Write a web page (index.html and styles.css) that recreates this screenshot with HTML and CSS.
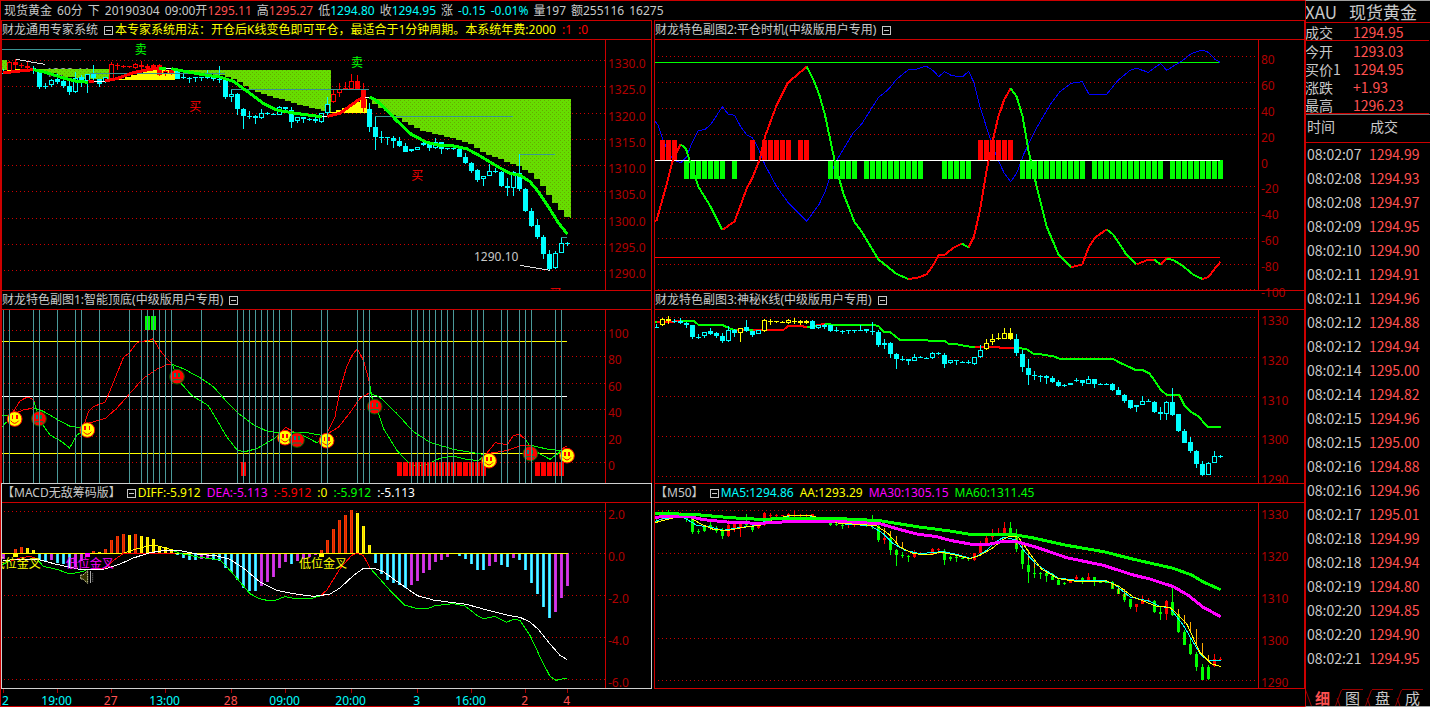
FILE: index.html
```html
<!DOCTYPE html>
<html lang="zh-CN">
<head>
  <meta charset="UTF-8">
  <title>现货黄金 60分</title>
  <link rel="stylesheet" href="styles.css">
</head>
<body>
  <main class="charts">
    <div class="topbar">
      <span>现货黄金</span><span>60分</span><span class="period">下</span><span>20190304</span>
      <span>09:00开<b class="up">1295.11</b></span>
      <span>高<b class="up">1295.27</b></span>
      <span>低<b class="down">1294.80</b></span>
      <span>收<b class="down">1294.95</b></span>
      <span>涨</span><span class="down">-0.15</span><span class="down">-0.01%</span>
      <span>量197</span><span>额255116</span><span>16275</span>
    </div>

    <section class="panel">
      <div class="head">
        <span>财龙通用专家系统</span><button class="fold" aria-label="收起"></button>
        <span class="yellow">本专家系统用法：开仓后K线变色即可平仓，最适合于1分钟周期。本系统年费:2000</span>
        <span class="red">:1</span><span class="red">:0</span>
      </div>
      <div class="body">
        <svg class="plot" id="main" viewBox="6 120 1809 750" preserveAspectRatio="none"></svg>
        <div class="axis axis-main">
          <span>1330.0</span><span>1325.0</span><span>1320.0</span><span>1315.0</span><span>1310.0</span><span>1305.0</span><span>1300.0</span><span>1295.0</span><span>1290.0</span>
        </div>
      </div>
    </section>

    <section class="panel overhang">
      <div class="head">
        <span>财龙特色副图2:平仓时机(中级版用户专用)</span><button class="fold" aria-label="收起"></button>
      </div>
      <div class="body">
        <svg class="plot" id="exit" viewBox="15 120 1809 750" preserveAspectRatio="none"></svg>
        <div class="axis axis-exit">
          <span>80</span><span>60</span><span>40</span><span>20</span><span>0</span><span>-20</span><span>-40</span><span>-60</span><span>-80</span><span>-100</span>
        </div>
      </div>
    </section>

    <section class="panel">
      <div class="head">
        <span>财龙特色副图1:智能顶底(中级版用户专用)</span><button class="fold" aria-label="收起"></button>
      </div>
      <div class="body">
        <svg class="plot" id="peaks" viewBox="6 60 1809 519" preserveAspectRatio="none"></svg>
        <div class="axis axis-peaks">
          <span>100</span><span>80</span><span>60</span><span>40</span><span>20</span><span>0</span>
        </div>
      </div>
    </section>

    <section class="panel">
      <div class="head">
        <span>财龙特色副图3:神秘K线(中级版用户专用)</span><button class="fold" aria-label="收起"></button>
      </div>
      <div class="body">
        <svg class="plot" id="kline" viewBox="15 60 1809 519" preserveAspectRatio="none"></svg>
        <div class="axis axis-kline">
          <span>1330</span><span>1320</span><span>1310</span><span>1300</span><span>1290</span>
        </div>
      </div>
    </section>

    <section class="panel selected">
      <div class="head">
        <span>【MACD无敌筹码版】</span><button class="fold" aria-label="收起"></button>
        <span class="yellow">DIFF:-5.912</span><span class="magenta">DEA:-5.113</span><span class="red">:-5.912</span><span class="yellow">:0</span><span class="green">:-5.912</span><span class="white">:-5.113</span>
      </div>
      <div class="body">
        <svg class="plot" id="macd" viewBox="6 63 1809 555" preserveAspectRatio="none"></svg>
        <div class="axis axis-ma">
          <span>2.0</span><span>0.0</span><span>-2.0</span><span>-4.0</span><span>-6.0</span>
        </div>
      </div>
    </section>

    <section class="panel last">
      <div class="head">
        <span>【M50】</span><button class="fold" aria-label="收起"></button>
        <span class="down">MA5:1294.86</span><span class="yellow">AA:1293.29</span><span class="magenta">MA30:1305.15</span><span class="green">MA60:1311.45</span>
      </div>
      <div class="body">
        <svg class="plot" id="m50" viewBox="15 63 1809 555" preserveAspectRatio="none"></svg>
        <div class="axis axis-ma">
          <span>1330</span><span>1320</span><span>1310</span><span>1300</span><span>1290</span>
        </div>
      </div>
    </section>

    <div class="timeline">
      <svg id="times" viewBox="6 0 1809 51" preserveAspectRatio="none"></svg>
    </div>
  </main>

  <aside class="side">
    <h1>XAU <span>现货黄金</span></h1>
    <table class="quote">
      <tr class="deal"><th>成交</th><td>1294.95</td></tr>
      <tr><th>今开</th><td>1293.03</td></tr>
      <tr><th>买价1</th><td>1294.95</td></tr>
      <tr><th>涨跌</th><td>+1.93</td></tr>
      <tr><th>最高</th><td>1296.23</td></tr>
    </table>
    <table class="trades">
      <thead><tr><th>时间</th><th>成交</th></tr></thead>
      <tbody id="trades"></tbody>
    </table>
    <nav class="tabs">
      <button class="active">细</button><button>图</button><button>盘</button><button>成</button>
    </nav>
  </aside>

  <script src="charts.js"></script>
</body>
</html>
```
FILE: styles.css
```css
* {
  box-sizing: border-box;
}
body {
  margin: 0;
  min-height: 100vh;
  display: flex;
  background-color: #000;
  color: #c8c8c8;
  font-family: "Noto Sans", "Noto Sans CJK SC", sans-serif;
  font-size: 12px;
}
button {
  padding: 0;
  border: 0;
  background: none;
  color: inherit;
  font: inherit;
}
.up { color: #ff5050; }
.down { color: #0ff; }
.yellow { color: #ff0; }
.red { color: #f00; }
.green { color: #0f0; }
.magenta { color: #f0f; }
.white { color: #fff; }

.charts {
  flex: 1;
  min-width: 0;
  display: grid;
  grid-template-columns: 1fr 1fr;
  grid-template-rows: 20px 270fr 193fr 206fr 18px;
  column-gap: 2px;
  padding-left: 1px;
  background: linear-gradient(#c00, #c00) left / 1px 100% no-repeat;
}
.topbar {
  grid-column: 1 / 3;
  display: flex;
  gap: 5px;
  padding-left: 3px;
  border-top: 1px solid #c00;
  line-height: 19px;
  white-space: nowrap;
  overflow: hidden;
}
.topbar b {
  font-weight: normal;
}

.panel {
  display: flex;
  flex-direction: column;
  min-width: 0;
  min-height: 0;
  overflow: hidden;
  border: 1px solid #c00;
  border-bottom: 0;
}
.overhang {
  overflow: visible;
}
.selected {
  border: 1px solid #d0d0d0;
}
.last {
  border-bottom: 1px solid #c00;
}
.head {
  display: flex;
  align-items: center;
  height: 18px;
  line-height: 18px;
  white-space: nowrap;
  overflow: hidden;
}
.head span + span {
  margin-left: 6px;
}
.fold {
  flex: none;
  width: 9px;
  height: 9px;
  margin: 0 2px 0 6px;
  border: 1px solid #c8c8c8;
  background: linear-gradient(#c8c8c8, #c8c8c8) center / 5px 1px no-repeat;
}
.body {
  flex: 1;
  min-height: 0;
  display: flex;
  border-top: 1px solid #c00;
}
.plot {
  flex: 1;
  min-width: 0;
  height: 100%;
  border-right: 1px solid #c00;
}
.axis {
  width: 45px;
  padding-left: 2px;
  display: flex;
  flex-direction: column;
  justify-content: space-between;
  color: #b00000;
  line-height: 20px;
}
.axis-main { padding-top: 14px; padding-bottom: 6px; }
.axis-exit { padding-top: 10px; margin-bottom: -13px; }
.axis-peaks { padding-top: 14px; padding-bottom: 7px; }
.axis-kline { padding-top: 1px; margin-bottom: -7px; }
.axis-ma { padding-top: 2px; margin-bottom: -5px; }

.timeline {
  grid-column: 1 / 3;
  display: grid;
  grid-template-columns: 1fr 1fr;
  column-gap: 2px;
  border-bottom: 1px solid #c00;
}
.timeline svg {
  width: calc(100% - 48px);
  height: 17px;
  margin-left: 1px;
  overflow: visible;
}
svg text {
  font-size: 36px;
}

.side {
  width: 125px;
  display: flex;
  flex-direction: column;
  border-top: 1px solid #a0a0a0;
  border-left: 1px solid #c00;
  border-bottom: 1px solid #a0a0a0;
  font-family: "Noto Sans CJK SC", sans-serif;
  font-size: 14px;
  overflow: hidden;
}
.side h1 {
  height: 22px;
  margin: 0 0 0 -1px;
  border-bottom: 1px solid #c00;
  font-size: 17px;
  font-weight: normal;
  line-height: 21px;
  white-space: nowrap;
}
.side h1 span {
  margin-left: 8px;
}
.side table {
  border-collapse: separate;
  border-spacing: 0;
  table-layout: fixed;
  width: 100%;
}
.side th,
.side td {
  padding: 0;
  font-weight: normal;
  text-align: left;
  white-space: nowrap;
}
.side td {
  color: #ff5050;
}
.side .quote {
  margin-left: -1px;
  border-bottom: 1px solid #c00;
}
.quote th,
.quote td {
  height: 18px;
  padding-top: 2px;
  line-height: 16px;
}
.quote th {
  width: 48px;
}
.quote .deal th,
.quote .deal td {
  line-height: 15px;
  border-bottom: 1px solid #c00;
}
.trades {
  margin-top: 0;
  border-top: 1px solid #707070;
}
.trades th {
  height: 28px;
  padding: 0 0 5px 1px;
  border-bottom: 1px solid #c00;
}
.trades th:first-child {
  width: 63px;
}
.side .trades td {
  height: 24px;
  padding-bottom: 2px;
  line-height: 22px;
}
.trades td:first-child {
  padding-left: 1px;
  color: #c8c8c8;
}

.tabs {
  display: flex;
  gap: 9px;
  margin-top: auto;
  padding-left: 6px;
  color: #c8c8c8;
}
.tabs button {
  position: relative;
  flex: none;
  width: 21px;
  height: 17px;
  padding-bottom: 2px;
  border-top: 1px solid #900;
  font-size: 15px;
  line-height: 13px;
}
.tabs button::before,
.tabs button::after {
  content: "";
  position: absolute;
  top: 0;
  left: -4px;
  height: 16px;
  border-left: 1px solid #900;
  transform: skewX(-20deg);
}
.tabs button::after {
  top: 8px;
  height: 8px;
  transform: skewX(20deg);
}
.tabs .active {
  border-top-color: transparent;
  color: #ff5050;
  font-weight: bold;
}
.tabs .active::before {
  transform: skewX(20deg);
}
.tabs .active::after {
  display: none;
}
```
FILE: charts.js
```js
// Every plot uses 3 units per pixel; bars are 18 units apart.
const STEP = 18;
const RED = '#f00', GREEN = '#0f0', CYAN = '#0ff', YELLOW = '#ff0', WHITE = '#fff', TEAL = '#3a9494';

// high, top, bottom, low, hollow
const candles = [
  [207,219,221,222], [183,187,213,215,1], [178,187,195,208], [190,196,198,205], [186,197,204,206],
  [198,205,213,222], [210,212,260,267], [249,258,260,268], [238,239,256,262,1], [222,236,246,252],
  [240,244,257,264], [244,257,275,285], [217,233,275,279,1], [226,232,244,260], [222,223,244,278,1],
  [194,221,234,240], [236,237,252,260], [231,232,246,248,1], [187,191,236,238,1], [190,196,199,210],
  [195,197,200,204], [197,199,202,203], [189,193,204,208,1], [183,196,200,206], [193,197,203,210,1],
  [192,196,203,208], [193,195,226,228], [210,212,223,228,1], [208,210,218,226], [210,212,236,238],
  [218,231,234,238], [232,234,237,249], [230,232,235,246], [230,232,234,242], [210,231,233,236],
  [226,228,236,242], [198,236,239,250], [232,238,290,298], [268,283,290,305,1], [280,283,326,344],
  [324,326,347,386], [334,347,349,356], [346,348,354,372], [328,340,354,356,1], [336,340,342,344],
  [340,342,344,346], [318,322,344,346,1], [320,322,328,332], [322,330,366,383], [350,352,362,368,1],
  [350,352,356,370], [354,357,360,362], [352,357,362,368], [338,340,365,369,1], [292,311,338,344,1],
  [268,283,307,309,1], [248,268,280,290,1], [245,264,268,270], [222,244,266,268,1], [225,244,268,270],
  [248,269,323,335], [310,326,380,396], [348,381,410,449], [393,411,413,430], [410,412,415,436],
  [408,414,422,444], [412,423,438,440], [430,438,455,457], [446,448,454,456], [441,442,449,450,1],
  [420,428,434,438], [428,430,443,452], [414,427,444,446,1], [426,427,446,462], [443,445,448,450],
  [443,445,448,450], [442,446,470,472], [458,471,489,491], [487,489,513,520], [508,510,540,545],
  [528,529,537,558,1], [493,513,527,529,1], [505,514,516,518], [513,515,558,560], [535,558,563,588],
  [514,517,563,588,1], [463,518,567,573], [564,566,632,636], [624,632,678,680], [657,675,711,717],
  [705,711,762,777], [750,762,807,810], [753,759,805,807,1], [712,730,758,760,1], [725,730,732,737]
];

const trades = [
  ['08:02:07','1294.99'], ['08:02:08','1294.93'], ['08:02:08','1294.97'], ['08:02:09','1294.95'],
  ['08:02:10','1294.90'], ['08:02:11','1294.91'], ['08:02:11','1294.96'], ['08:02:12','1294.88'],
  ['08:02:12','1294.94'], ['08:02:14','1295.00'], ['08:02:14','1294.82'], ['08:02:15','1294.96'],
  ['08:02:15','1295.00'], ['08:02:16','1294.88'], ['08:02:16','1294.96'], ['08:02:17','1295.01'],
  ['08:02:18','1294.99'], ['08:02:18','1294.94'], ['08:02:19','1294.80'], ['08:02:20','1294.85'],
  ['08:02:20','1294.90'], ['08:02:21','1294.95']
];

function el(parent, name, attrs, text) {
  const node = document.createElementNS('http://www.w3.org/2000/svg', name);
  for (const key in attrs) node.setAttribute(key, attrs[key]);
  if (text) node.textContent = text;
  parent.appendChild(node);
  return node;
}

function line(svg, color, width, points) {
  el(svg, 'polyline', { points, stroke: color, 'stroke-width': width, fill: 'none', 'shape-rendering': 'crispEdges' });
}

function rect(svg, x, y, width, height, fill) {
  el(svg, 'rect', { x, y, width, height, fill, 'shape-rendering': 'crispEdges' });
}

function label(svg, x, y, fill, text, anchor) {
  el(svg, 'text', { x, y, fill, 'text-anchor': anchor || 'start' }, text);
}

function grid(svg, x, rows) {
  rows.forEach(y => el(svg, 'line', {
    x1: x, x2: x + 1812, y1: y, y2: y, stroke: '#c00', 'stroke-width': 3,
    'stroke-dasharray': '3 9', 'shape-rendering': 'crispEdges'
  }));
}

function range(from, to) {
  const list = [];
  for (let i = from; i <= to; i++) list.push(i);
  return list;
}

function drawCandles(svg, x0, scale, color, solid) {
  candles.forEach((c, i) => {
    const x = x0 + i * STEP;
    const [high, top, bottom, low] = c.slice(0, 4).map(scale);
    const fill = color(i, c[4]);
    const half = solid ? 4 : 7;
    const height = Math.max(bottom - top, 3);
    rect(svg, x - 1, high, 3, Math.max(top - high, 0), fill);
    rect(svg, x - 1, bottom, 3, Math.max(low - bottom, 0), fill);
    if (c[4] && !solid) {
      el(svg, 'rect', { x: x - 6, y: top + 1, width: 12, height: Math.max(height - 3, 3), fill: '#000', stroke: fill, 'stroke-width': 3, 'shape-rendering': 'crispEdges' });
    } else {
      rect(svg, x - half, top, half * 2 + 1, height, fill);
    }
  });
}

// Stepped lower edge of a filled band, one step per bar.
function band(svg, fill, flat, points) {
  const last = points[points.length - 1];
  let d = `M${points[0][0]} ${flat}`;
  for (let x = points[0][0]; x < last[0]; x += STEP) {
    let k = 0;
    while (k < points.length - 2 && points[k + 1][0] < x) k++;
    const [ax, ay] = points[k], [bx, by] = points[k + 1];
    const y = Math.round(ay + (by - ay) * (x - ax) / (bx - ax));
    d += `V${y}H${Math.min(x + STEP, last[0])}`;
  }
  el(svg, 'path', { d: d + `V${flat}Z`, fill, 'shape-rendering': 'crispEdges' });
}

function drawMain() {
  const svg = document.getElementById('main');
  const defs = el(svg, 'defs', {});
  const dots = el(defs, 'pattern', { id: 'dots', width: 12, height: 12, patternUnits: 'userSpaceOnUse' });
  rect(dots, 0, 0, 12, 12, '#6d0');
  rect(dots, 0, 0, 3, 3, '#6a0');
  rect(dots, 6, 6, 3, 3, '#6a0');
  grid(svg, 12, [181, 259, 340, 418, 496, 574, 655, 733, 811]);
  label(svg, 138, 231, '#aaa', '1328.11');
  rect(svg, 6, 180, 15, 30, 'url(#dots)');
  band(svg, 'url(#dots)', 207, [[100, 210], [140, 216], [190, 230], [235, 236], [328, 236]]);
  band(svg, 'url(#dots)', 209, [[530, 212], [600, 220], [660, 226], [700, 240], [750, 270], [800, 288], [870, 308], [920, 322], [970, 335], [993, 338]]);
  band(svg, 'url(#dots)', 297, [[1115, 312], [1170, 345], [1225, 376], [1260, 393], [1340, 412], [1400, 430], [1440, 458], [1510, 485], [1550, 500], [1585, 520], [1610, 545], [1645, 595], [1665, 622], [1695, 654], [1712, 654]]);
  band(svg, YELLOW, 239, [[358, 237], [400, 222], [440, 210], [526, 210]]);
  band(svg, YELLOW, 339, [[990, 335], [1030, 322], [1060, 308], [1080, 298], [1102, 298]]);
  drawCandles(svg, 10, y => y, i => (i > 0 && i < 5) || (i > 17 && i < 29) || (i > 54 && i < 61) ? RED : CYAN);
  [[6, 242, 148], [270, 675, 220], [694, 1107, 268], [1126, 1539, 349], [1560, 1665, 463], [1684, 1700, 712]]
    .forEach(([a, b, y]) => line(svg, TEAL, 3, `${a},${y} ${b},${y}`));
  line(svg, '#ddd', 3, '48,178 134,193');
  line(svg, '#ddd', 3, '1560,796 1650,811');
  line(svg, YELLOW, 5, '20,214 72,208');
  line(svg, RED, 9, '10,219 50,214 80,211 100,209');
  line(svg, GREEN, 9, '100,209 140,218 190,234 230,244 265,247');
  line(svg, WHITE, 4, '280,244 316,244');
  line(svg, RED, 9, '266,246 282,244');
  line(svg, RED, 9, '316,243 350,236 400,218 450,208 480,205');
  line(svg, GREEN, 9, '478,205 498,205');
  line(svg, WHITE, 4, '498,205 514,205');
  line(svg, GREEN, 9, '514,206 560,215 620,226 660,231 700,244 750,280 790,310 830,330 880,339 930,346 966,350');
  line(svg, WHITE, 4, '966,349 982,349');
  line(svg, RED, 9, '982,349 1020,340 1050,318 1078,298 1095,292');
  line(svg, WHITE, 4, '1095,292 1108,292');
  line(svg, GREEN, 9, '1108,292 1125,298 1150,320 1190,362 1235,404 1280,427 1320,436 1360,438 1400,446 1440,468 1500,504 1530,520 1560,526 1590,545 1615,575 1650,628 1675,668 1702,702');
  label(svg, 404, 163, GREEN, '卖');
  label(svg, 1053, 202, GREEN, '卖');
  label(svg, 568, 332, RED, '买');
  label(svg, 1234, 540, RED, '买');
  label(svg, 1648, 894, RED, '买');
  label(svg, 1422, 784, '#c8c8c8', '1290.10');
}

function drawExit() {
  const svg = document.getElementById('exit');
  grid(svg, 24, [169, 247, 325, 403, 559, 637, 715, 793, 868]);
  line(svg, GREEN, 3, '15,187 1710,187');
  line(svg, RED, 3, '15,772 1710,772');
  line(svg, '#00f', 3, '15,364 24,375 36,412 50,445 70,480 92,488 110,470 125,430 145,392 165,388 182,374 217,320 235,343 254,346 272,380 290,404 306,412 325,445 345,495 380,560 416,610 470,664 508,612 525,575 540,530 555,490 610,398 635,372 685,293 715,268 740,238 775,209 800,207 828,198 850,212 866,230 884,215 905,227 938,230 956,214 972,248 990,320 1020,415 1045,482 1063,520 1082,545 1100,520 1120,465 1160,383 1200,315 1230,275 1263,250 1297,245 1317,283 1370,283 1405,240 1440,211 1460,205 1495,217 1532,190 1550,211 1600,180 1625,160 1657,150 1675,157 1695,178 1710,187');
  [1, 2, 3, 16, 18, 19, 20, 21, 22, 24, 25, ...range(54, 59)]
    .forEach(i => rect(svg, 12 + i * STEP, 420, 15, 60, RED));
  [...range(5, 11), 13, ...range(29, 33), ...range(35, 44), ...range(48, 52), ...range(61, 71), ...range(73, 84), ...range(86, 94)]
    .forEach(i => rect(svg, 12 + i * STEP, 481, 15, 56, GREEN));
  line(svg, WHITE, 3, '15,481 1710,481');
  [
    [RED, '15,664 20,660 48,560 70,475 92,433'],
    [GREEN, '92,433 108,447 125,500 145,560 182,620 217,690'],
    [RED, '217,690 254,664 290,566 306,536 328,482 345,410 380,315 414,248 470,200'],
    [GREEN, '470,200 490,238 508,285 525,345 545,440 560,510 580,580 614,667 635,695 685,778 740,822 775,837'],
    [RED, '775,837 800,834 830,823 850,795 866,766 884,764 910,744 935,731'],
    [GREEN, '935,731 956,742'],
    [RED, '956,742 972,710 990,630 1010,510 1030,415 1045,350 1063,298 1082,265'],
    [GREEN, '1082,265 1100,290 1118,350 1135,450 1160,560 1190,680 1225,762 1263,802'],
    [RED, '1263,802 1297,793 1317,740 1335,713 1370,688'],
    [GREEN, '1370,688 1390,704 1430,765 1460,793'],
    [RED, '1460,793 1495,779 1513,779'],
    [GREEN, '1513,779 1532,793'],
    [RED, '1532,793 1550,776'],
    [GREEN, '1550,776 1570,780 1600,799 1630,824 1657,837'],
    [RED, '1657,837 1675,831 1695,805 1712,785']
  ].forEach(([color, points]) => line(svg, color, 6, points));
}

function face(svg, x, y, happy) {
  const g = el(svg, 'g', { transform: `translate(${x} ${y})` });
  const ink = happy ? RED : '#084';
  el(g, 'circle', { r: 22, fill: happy ? YELLOW : RED, stroke: happy ? RED : '#060', 'stroke-width': 3 });
  rect(g, -9, -12, 5, 12, happy ? RED : '#088');
  rect(g, 4, -12, 5, 12, ink);
  el(g, 'path', { d: happy ? 'M-12 5Q0 21 12 5' : 'M-12 14V9H12V14', stroke: ink, 'stroke-width': 3, fill: 'none' });
}

function drawPeaks() {
  const svg = document.getElementById('peaks');
  grid(svg, 12, [121, 199, 280, 358, 439, 517]);
  line(svg, YELLOW, 3, '6,154 1701,154');
  line(svg, YELLOW, 3, '6,490 1701,490');
  line(svg, WHITE, 3, '6,319 1701,319');
  [
    [GREEN, '6,375 25,376'], [GREEN, '6,412 20,395'],
    [RED, '30,385 44,358 60,333 80,322 95,325 103,336'],
    [GREEN, '103,336 108,355 125,400 150,435 185,455 209,474 230,436 245,425'],
    [RED, '250,410 265,365 280,350 316,336 335,290 370,203 388,188 412,157 450,150 460,146 478,178 500,206 516,222'],
    [GREEN, '516,222 530,255 545,282 575,316 625,347 645,380 680,440 712,481 735,485 770,476 825,444 838,430'],
    [RED, '838,430 857,412 880,425'],
    [GREEN, '880,425 920,442 950,458 965,450'],
    [RED, '982,428 1005,380 1020,300 1040,230 1055,198 1072,176 1090,210 1108,275'],
    [GREEN, '1108,275 1115,320 1135,370 1150,415 1190,480 1225,518 1252,529 1285,521 1320,505 1360,498 1400,508 1435,512 1450,500'],
    [RED, '1460,490 1486,458 1522,464 1540,437 1558,432 1578,450'],
    [GREEN, '1578,450 1590,470 1620,492 1650,508 1675,490 1685,478'],
    [RED, '1685,478 1700,468'],
    [RED, '44,370 70,360 100,353'],
    [GREEN, '100,353 130,364 175,390 210,409 245,413'],
    [RED, '265,400 316,385 350,355 390,310 430,265 470,238 500,224 516,223'],
    [GREEN, '516,223 550,236 600,263 640,290 680,335 715,370 760,404 800,423 838,428 920,428 965,436'],
    [RED, '982,432 1015,412 1050,368 1080,325 1108,309'],
    [GREEN, '1108,309 1140,322 1190,370 1240,425 1290,457 1360,478 1450,493'],
    [RED, '1468,490 1520,482 1560,468 1594,466'],
    [GREEN, '1594,466 1640,477 1685,482']
  ].forEach(([color, points]) => line(svg, color, 3, points));
  [40, ...range(66, 80), ...range(89, 93)].forEach(i => rect(svg, 3 + i * STEP, 516, 15, 41, RED));
  [24, 25].forEach(i => rect(svg, 3 + i * STEP, 78, 15, 42, GREEN));
  [[44, 387, 1], [117, 386, 0], [262, 420, 1], [531, 260, 0], [855, 443, 1], [891, 450, 0], [980, 452, 1],
    [1124, 350, 0], [1467, 512, 1], [1591, 491, 0], [1701, 497, 1]].forEach(f => face(svg, ...f));
  [0, 1, 5, 6, 9, 12, 13, 16, 21, 23, 24, 25, 26, 27, 28, 33, ...range(39, 46), 48, 53, 54, 59, 60, 61,
    ...range(68, 75), 78, 79, 80, 83, 84, 86, 87, 88, 92, 93]
    .forEach(i => {
      const x = 10 + i * STEP;
      line(svg, '#4a9a9a', 3, `${x},60 ${x},579`);
    });
}

function drawKline() {
  const svg = document.getElementById('kline');
  grid(svg, 24, [82, 202, 319, 439, 559]);
  [
    [GREEN, '15,96 22,96'], [RED, '22,96 70,95 92,92'],
    [GREEN, '92,92 130,92 145,104 215,104 248,119 262,119'], [RED, '262,120 290,120'],
    [GREEN, '290,120 310,120'], [RED, '310,120 400,120 415,107 445,107 470,111'],
    [GREEN, '470,111 500,108'], [RED, '500,106 525,101'],
    [GREEN, '525,101 545,104 650,104 685,107 700,125 720,126 750,150 830,150 840,153 885,153 895,161 920,163 960,170 975,170'],
    [RED, '975,170 1045,170 1050,174 1108,174'],
    [GREEN, '1108,174 1130,178 1150,191 1180,194 1210,199 1228,206 1388,206 1405,216 1455,239 1480,241 1498,250 1513,270 1532,300 1550,314 1588,315 1603,345 1622,365 1645,379 1673,411 1712,411']
  ].forEach(([color, points]) => line(svg, color, 6, points));
  const yellow = [1, 2, 14, ...range(18, 25), ...range(55, 59)];
  drawCandles(svg, 20, y => Math.round(82 + (y - 181.5) / 1.32), i => yellow.includes(i) ? YELLOW : CYAN);
}

function drawMacd() {
  const svg = document.getElementById('macd');
  const ends = [
    232, 214, 200, 195, 198, 204, 234, 236, 235, 242, 246, 258, 256, 236, 222, 207, 210, 201, 174, 162,
    156, 158, 156, 162, 165, 171, 192, 198, 201, 220, 228, 234, 234, 232, 230, 234, 238, 258, 270, 294,
    318, 327, 327, 312, 300, 285, 258, 240, 246, 236, 230, 224, 220, 204, 174, 141, 114, 99, 84, 93,
    132, 189, 243, 276, 294, 303, 309, 318, 309, 297, 273, 264, 240, 234, 225, 214, 222, 231, 246, 264,
    264, 252, 240, 249, 255, 228, 234, 264, 303, 336, 375, 408, 390, 348, 312
  ];
  grid(svg, 12, [88, 214, 340, 466, 592]);
  ends.forEach((y, i) => {
    const prev = i ? ends[i - 1] : 300;
    const x = 6 + i * STEP;
    let fill;
    if (y < 214) fill = y < prev ? ['#f30', '#c63000'] : [YELLOW, '#fc0'];
    else fill = y >= prev ? ['#3cf', '#5ff'] : ['#c3c', '#c3f'];
    rect(svg, x, Math.min(y, 214), 9, Math.abs(y - 214), fill[0]);
    rect(svg, x + 3, Math.min(y, 214), 3, Math.abs(y - 214), fill[1]);
  });
  line(svg, YELLOW, 3, '6,214 1703,214');
  [
    [RED, '30,238 60,228 90,223 110,230'],
    [GREEN, '6,248 30,238'],
    [GREEN, '110,230 130,253 170,262 210,276 250,268 262,262'],
    [RED, '262,262 316,258 340,236 370,214'],
    [YELLOW, '370,214 410,200 460,189 500,198 520,206'],
    [RED, '370,215 524,215'],
    [GREEN, '520,206 540,214 600,226 660,234 690,265 720,300 750,335 775,349 805,356 825,355 855,344 880,349 935,349 960,342'],
    [RED, '960,342 980,325 1020,260 1055,220 1072,214 1090,220 1110,258'],
    [GREEN, '1110,258 1130,280 1170,325 1215,370 1250,379 1288,378 1305,371 1360,365 1395,372 1435,403 1452,410 1484,403 1520,421 1540,412 1560,415 1590,460 1625,535 1650,583 1668,595 1700,588'],
    [WHITE, '10,236 60,231 120,234 170,247 240,262 316,261 360,246 400,228 450,212 498,205 540,206 590,216 650,222 690,232 730,258 780,300 830,325 880,335 940,343 964,340 990,336 1020,318 1060,281 1090,259 1125,260 1150,269 1200,305 1252,341 1300,354 1360,362 1400,367 1460,384 1520,399 1560,406 1590,420 1615,442 1645,480 1680,520 1702,533']
  ].forEach(([color, points]) => line(svg, color, 3, points));
  rect(svg, 39, 214, 15, 10, YELLOW);
  rect(svg, 255, 214, 15, 10, '#f0f');
  rect(svg, 957, 214, 15, 10, YELLOW);
  label(svg, -22, 259, YELLOW, '低位金叉');
  label(svg, 197, 259, '#f0f', '低位金叉');
  label(svg, 897, 259, YELLOW, '低位金叉');
  el(svg, 'path', { d: 'M242 279H249L263 266V304L249 291H242Z', fill: '#330', stroke: '#cc9', 'stroke-width': 3, 'stroke-dasharray': '5 2' });
  line(svg, '#aaa', 3, '271,268 271,303');
  el(svg, 'line', { x1: 278, y1: 274, x2: 278, y2: 300, stroke: '#888', 'stroke-width': 3, 'stroke-dasharray': '3 3' });
}

function drawM50() {
  const svg = document.getElementById('m50');
  const rising = [1, 3, 4, 13, 19, 20, 21, 23, 25, 26, 32, 33, 34, 44, 45, 47, 57, 70, 82, 94];
  const falling = [8, 27, 49];
  grid(svg, 24, [86, 214, 340, 469, 596]);
  drawCandles(svg, 20, y => Math.round(86 + (y - 181.5) * 0.81),
    (i, hollow) => i !== 92 && !falling.includes(i) && (hollow || rising.includes(i)) ? RED : GREEN, true);
  [[38, 138, 158], [39, 147, 168], [40, 162, 184], [41, 180, 200], [60, 168, 190], [61, 180, 205], [62, 204, 234], [63, 230, 258],
    [76, 303, 318], [77, 312, 335], [78, 321, 345], [87, 381, 402], [88, 399, 425], [89, 420, 452], [90, 441, 490], [91, 483, 520], [92, 518, 538]]
    .forEach(([i, a, b]) => rect(svg, 19 + i * STEP, a, 3, b - a, '#fa0'));
  line(svg, CYAN, 3, '15,118 40,110 100,106 140,130 180,135 220,145 260,138 320,130 345,118 420,101 480,102 540,120 600,128 660,130 700,155 730,185 765,205 810,215 850,211 880,209 920,217 960,229 982,222 1010,205 1035,180 1063,165 1100,175 1125,210 1160,248 1225,288 1280,295 1360,296 1390,304 1440,345 1500,358 1530,373 1560,378 1600,430 1650,515 1672,535 1712,535');
  line(svg, YELLOW, 3, '15,122 50,113 90,103 120,106 150,125 190,142 230,146 280,136 330,130 370,112 420,100 480,100 530,115 570,124 640,128 680,132 715,155 750,195 790,215 840,219 870,210 920,220 960,230 990,220 1025,200 1063,170 1080,163 1105,165 1140,215 1175,262 1225,290 1280,298 1370,297 1410,315 1450,345 1520,373 1560,376 1610,425 1650,512 1685,546 1712,553');
  line(svg, '#f0f', 9, '15,106 60,102 120,104 160,113 240,121 330,124 430,118 560,117 620,121 690,125 740,140 800,156 860,164 900,175 960,186 1020,186 1060,178 1100,179 1160,196 1250,227 1360,250 1450,279 1500,291 1570,314 1615,340 1660,376 1712,404');
  line(svg, GREEN, 9, '15,94 60,95 140,98 240,107 330,112 400,110 570,110 690,116 800,134 900,147 960,157 1100,159 1150,168 1250,190 1360,209 1460,234 1570,259 1625,279 1660,300 1712,323');
}

function drawTimes() {
  const svg = document.getElementById('times');
  [[10, '2', 0, 16], [172, '19:00'], [334, '27', 1], [496, '13:00'], [694, '28', 1], [856, '09:00'], [1054, '20:00'],
    [1252, '3'], [1414, '16:00'], [1576, '2', 1], [1702, '4', 1]].forEach(([x, text, isNew, at]) => {
    rect(svg, x, 0, 3, 12, '#a00');
    label(svg, at || x - 2, 48, isNew ? '#ff5050' : CYAN, text, 'middle');
  });
}

document.getElementById('trades').innerHTML =
  trades.map(([time, price]) => `<tr><td>${time}</td><td>${price}</td></tr>`).join('');

drawMain();
drawExit();
drawPeaks();
drawKline();
drawMacd();
drawM50();
drawTimes();
```
